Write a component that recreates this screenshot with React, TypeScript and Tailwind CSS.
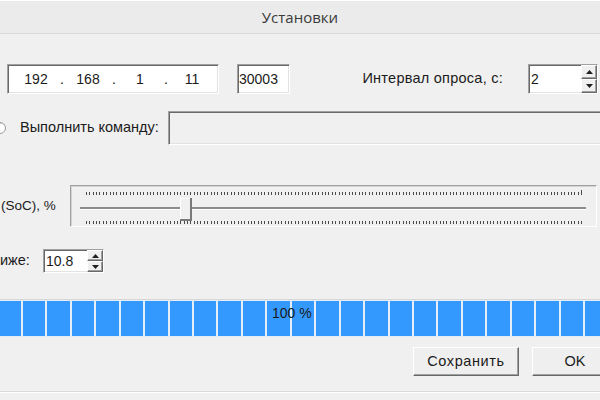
const sunken =
  'border border-t-[#a0a0a0] border-l-[#a0a0a0] border-b-white border-r-white shadow-[inset_1px_1px_0_#696969,inset_-1px_-1px_0_#e3e3e3]';
const raised =
  'border border-t-white border-l-white border-b-[#696969] border-r-[#696969] shadow-[inset_-1px_-1px_0_#a0a0a0]';

function Arrow({ up }: { up?: boolean }) {
  return (
    <svg width="7" height="4" viewBox="0 0 7 4">
      <path d={up ? 'M0 4 L3.5 0 L7 4 Z' : 'M0 0 L3.5 4 L7 0 Z'} fill="#202020" />
    </svg>
  );
}

function Spin({ value, className }: { value: string; className: string }) {
  return (
    <div className={`${className} ${sunken} bg-white flex shrink-0`}>
      <div className="flex-1 flex items-center pl-[2px] text-[14px]">{value}</div>
      <div className="w-[16px] flex flex-col">
        <div className={`flex-1 flex items-center justify-center bg-[#f0f0f0] ${raised}`}>
          <Arrow up />
        </div>
        <div className={`flex-1 flex items-center justify-center bg-[#f0f0f0] ${raised}`}>
          <Arrow />
        </div>
      </div>
    </div>
  );
}

function Slider() {
  const ticks = Array.from({ length: 148 }, (_, i) => 15 + (i * 495) / 147);
  return (
    <div className="ml-auto mr-[3px] w-[527px] h-full shrink-0 border border-t-[#a0a0a0] border-l-[#a0a0a0] border-b-white border-r-white shadow-[inset_1px_1px_0_#d4d4d4]">
      <svg width="525" height="40" className="block">
        {ticks.map((x, i) => (
          <g key={i} fill="#4a4a4a">
            <rect x={Math.round(x)} y={i === 147 ? 4 : 6} width="1" height={i === 147 ? 5 : 3} />
            <rect x={Math.round(x)} y={35} width="1" height={3} />
          </g>
        ))}
        <rect x="9" y="21" width="506" height="2" fill="#8c8c8c" />
        <rect x="9" y="23" width="506" height="1" fill="#ffffff" />
        <rect x="109" y="12" width="11" height="22" fill="#f0f0f0" />
        <rect x="109" y="12" width="1" height="22" fill="#ffffff" />
        <rect x="109" y="12" width="11" height="1" fill="#ffffff" />
        <rect x="119" y="12" width="2" height="23" fill="#7a7a7a" />
        <rect x="109" y="33" width="12" height="2" fill="#7a7a7a" />
      </svg>
    </div>
  );
}

export default function App() {
  return (
    <div className="w-[600px] h-[400px] overflow-hidden bg-[#f0f0f0] flex flex-col font-['Liberation_Sans',Arial,sans-serif] text-[13px] text-[#1b1b1b]">
      <div className="h-[34px] shrink-0 flex items-center justify-center bg-[#ebebeb] border-t border-t-white border-b border-b-[#d8d8d8] font-['Open_Sans',sans-serif] text-[15px] text-[#3a3a3a]">
        Установки
      </div>

      {/* адрес, порт, интервал */}
      <div className="mt-[30px] h-[30px] flex items-stretch shrink-0">
        <div className={`ml-[7px] w-[212px] shrink-0 bg-white flex items-center pl-[11px] text-[14px] ${sunken}`}>
          <span className="w-[34px] text-center">192</span>
          <span className="w-[18px] text-center">.</span>
          <span className="w-[34px] text-center">168</span>
          <span className="w-[18px] text-center">.</span>
          <span className="w-[34px] text-center">1</span>
          <span className="w-[18px] text-center">.</span>
          <span className="w-[34px] text-center">11</span>
        </div>
        <div className={`ml-[18px] w-[53px] shrink-0 bg-white flex items-center pl-[1px] text-[14px] ${sunken}`}>30003</div>
        <div className="ml-auto mr-[25px] self-center text-[14.5px] tracking-[0.25px]">Интервал опроса, с:</div>
        <Spin value="2" className="w-[70px] mr-[2px]" />
      </div>

      {/* команда */}
      <div className="mt-[17px] h-[34px] flex items-stretch shrink-0">
        <span className="ml-[-6px] w-[12px] h-[12px] self-center rounded-full border border-[#9a9a9a] bg-white shadow-[inset_1px_1px_0_#d0d0d0]" />
        <div className="ml-[14px] self-center text-[14.5px]">Выполнить команду:</div>
        <div className={`ml-auto w-[436px] -mr-[4px] shrink-0 bg-[#f0f0f0] ${sunken}`} />
      </div>

      {/* SoC */}
      <div className="mt-[40px] h-[42px] flex items-center shrink-0">
        <div className="pl-[1px] text-[13.5px]">(SoC), %</div>
        <Slider />
      </div>

      {/* нижний порог */}
      <div className="mt-[22px] h-[24px] flex items-stretch shrink-0">
        <div className="w-[43px] shrink-0 self-center text-[14.5px]">иже:</div>
        <Spin value="10.8" className="w-[61px]" />
      </div>

      {/* прогресс */}
      <div className="relative mt-[26px] h-[38px] shrink-0 border-t border-[#d6d6d6] bg-[#e4eef8] py-[1px] overflow-hidden">
        <div className="flex h-full gap-[2px] -ml-[1.5px]">
          {Array.from({ length: 26 }, (_, i) => (
            <div key={i} className="w-[22.45px] shrink-0 h-full bg-[#3399ff]" />
          ))}
        </div>
        <span className="absolute left-[272px] top-[6px] leading-[15px] text-[14px] text-[#1a1a1a]">100 %</span>
      </div>

      {/* кнопки */}
      <div className="mt-[10px] h-[29px] flex shrink-0">
        <button className={`ml-[413px] w-[106px] shrink-0 bg-[#efefef] text-[14.5px] tracking-[0.6px] ${raised}`}>Сохранить</button>
        <button className={`ml-[13px] w-[86px] shrink-0 bg-[#efefef] text-[14.5px] ${raised}`}>OK</button>
      </div>

      <div className="mt-[15px] border-t border-[#dadada] border-b border-b-white" />
    </div>
  );
}
